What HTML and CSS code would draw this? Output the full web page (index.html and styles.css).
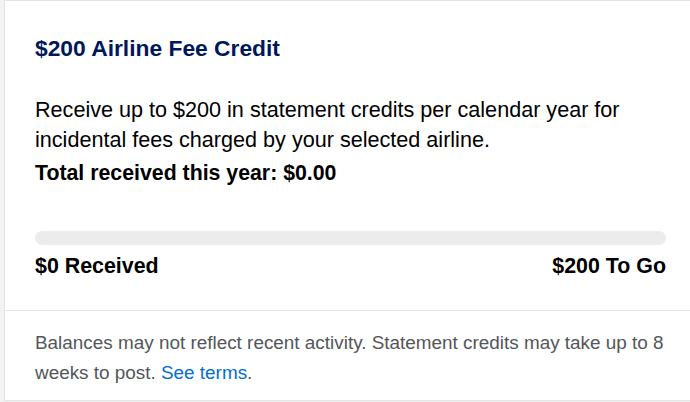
FILE: index.html
```html
<!DOCTYPE html>
<html>
<head>
<meta charset="utf-8">
<link rel="stylesheet" href="styles.css">
</head>
<body>
<div class="page">
  <div class="card">
    <div class="main">
      <h2 class="title">$200 Airline Fee Credit</h2>
      <p class="desc">Receive up to $200 in statement credits per calendar year for incidental fees charged by your selected airline.</p>
      <p class="total">Total received this year: $0.00</p>
      <div class="bar"><div class="fill" style="width:0%"></div></div>
      <div class="labels">
        <span>$0 Received</span>
        <span>$200 To Go</span>
      </div>
    </div>
    <div class="footer">
      Balances may not reflect recent activity. Statement credits may take up to 8 weeks to post. <a class="link" href="#">See terms</a>.
    </div>
  </div>
</div>
</body>
</html>
```
FILE: styles.css
```css
* { box-sizing: border-box; }
html, body {
  margin: 0;
  padding: 0;
  background: #f3f3f3;
  font-family: "Liberation Sans", Arial, Helvetica, sans-serif;
}
.page {
  padding-left: 4px;
  height: 402px;
  overflow: hidden;
}
.card {
  background: #ffffff;
  border: 1px solid #e4e4e4;
  border-right: none;
  height: 401px;
  display: flex;
  flex-direction: column;
}
.main {
  padding: 33px 24px 32px 30px;
  border-bottom: 1px solid #e4e4e4;
}
.title {
  margin: 0;
  font-size: 22.8px;
  line-height: 28px;
  font-weight: bold;
  color: #00175a;
}
.desc {
  margin: 33px 0 0;
  font-size: 21.6px;
  line-height: 30px;
  color: #000;
}
.total {
  margin: 3px 0 0;
  font-size: 21.3px;
  line-height: 30px;
  font-weight: bold;
  color: #000;
}
.bar {
  margin-top: 43px;
  height: 14px;
  border-radius: 7px;
  background: #ececec;
  overflow: hidden;
}
.fill {
  height: 100%;
  background: #006fcf;
}
.labels {
  margin-top: 9px;
  display: flex;
  justify-content: space-between;
  font-size: 21.4px;
  line-height: 24px;
  font-weight: bold;
  color: #000;
}
.footer {
  padding: 17px 10px 12px 30px;
  font-size: 18.9px;
  line-height: 30px;
  color: #53565a;
}
.link {
  color: #006fcf;
  text-decoration: none;
}
```
